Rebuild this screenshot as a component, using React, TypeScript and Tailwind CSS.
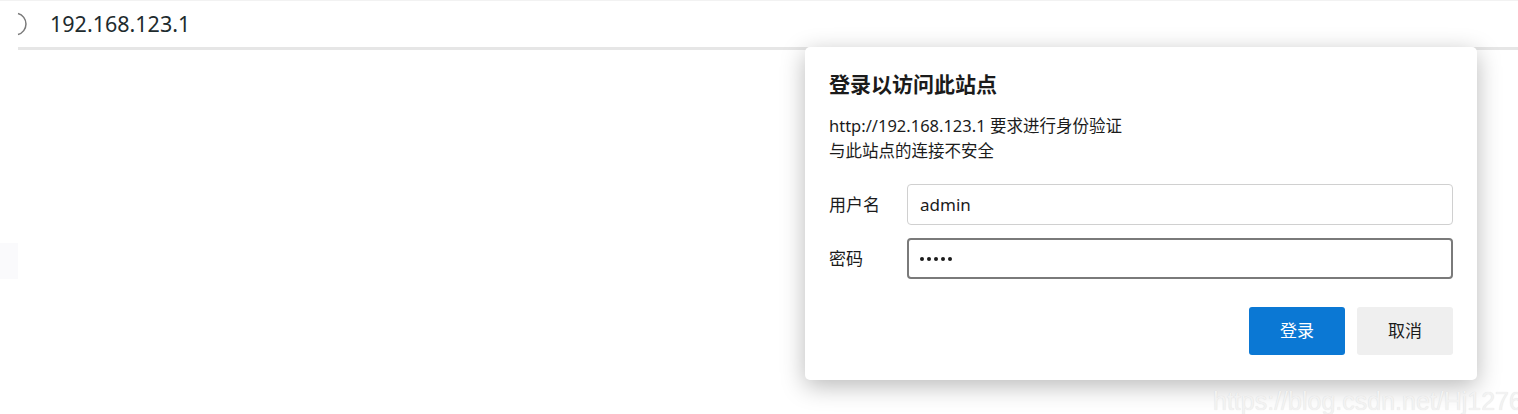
import React from "react";

const font = { fontFamily: '"Segoe UI", "Noto Sans", "Noto Sans CJK SC", sans-serif' };

export default function App() {
  return (
    <div className="relative w-[1518px] h-[414px] bg-white overflow-hidden" style={font}>
      {/* address bar */}
      <div className="h-[47px] border-t border-[#f2f2f2] flex items-center">
        <svg width="50" height="46" viewBox="0 0 50 46" className="shrink-0">
          <path d="M18 12.5 A10.9 10.9 0 0 1 18 33.5" fill="none" stroke="#7a7a7a" strokeWidth="1.5" />
        </svg>
        <span className="text-[21.5px] text-[#1e2b2e] leading-none">192.168.123.1</span>
      </div>
      <div className="flex">
        <div className="w-[18px]" />
        <div className="flex-1 h-[3px] bg-[#e6e6e6]" />
      </div>
      {/* left faint block */}
      <div className="absolute left-0 top-[243px] w-[18px] h-[36px] bg-[#fafafc]" />

      {/* dialog */}
      <div className="absolute left-[805px] top-[47px] w-[672px] h-[333px] bg-white rounded-[5px] shadow-[0_6px_24px_rgba(0,0,0,0.28)] pl-[24px] pr-[24px] pt-[24px] flex flex-col">
        <div className="text-[21px] font-bold text-[#1b1b1b] leading-[26px]">登录以访问此站点</div>
        <div className="mt-[16px] text-[16.5px] text-[#1b1b1b] leading-[25px]">
          <div>http://192.168.123.1 要求进行身份验证</div>
          <div>与此站点的连接不安全</div>
        </div>
        <div className="mt-[21px] flex items-center">
          <div className="w-[78px] text-[17px] text-[#1b1b1b]">用户名</div>
          <div className="flex-1 h-[41px] border border-[#d0d0d0] rounded-[4px] flex items-center pl-[12px] text-[17px] text-[#1b1b1b]">admin</div>
        </div>
        <div className="mt-[13px] flex items-center">
          <div className="w-[78px] text-[17px] text-[#1b1b1b]">密码</div>
          <div className="flex-1 h-[41px] border-2 border-[#7a7a7a] rounded-[4px] flex items-center pl-[11px] text-[#1b1b1b]">
            <div className="flex gap-[3px]">
              <span className="w-[4px] h-[4px] rounded-full bg-[#1b1b1b]" />
              <span className="w-[4px] h-[4px] rounded-full bg-[#1b1b1b]" />
              <span className="w-[4px] h-[4px] rounded-full bg-[#1b1b1b]" />
              <span className="w-[4px] h-[4px] rounded-full bg-[#1b1b1b]" />
              <span className="w-[4px] h-[4px] rounded-full bg-[#1b1b1b]" />
            </div>
          </div>
        </div>
        <div className="mt-[28px] flex justify-end gap-[12px]">
          <button className="w-[96px] h-[48px] bg-[#0b78d4] rounded-[3px] text-white text-[17px]">登录</button>
          <button className="w-[96px] h-[48px] bg-[#efefef] rounded-[3px] text-[#1b1b1b] text-[17px]">取消</button>
        </div>
      </div>

      {/* watermark */}
      <div
        className="absolute left-[1213px] top-[388px] text-[25px] leading-[26px] whitespace-nowrap text-[#f2f2f2]"
        style={{ fontFamily: '"Liberation Sans", Arial, sans-serif', textShadow: "0 0 1px rgba(0,0,0,0.12)" }}
      >
        https://blog.csdn.net/Hj12766
      </div>
    </div>
  );
}
